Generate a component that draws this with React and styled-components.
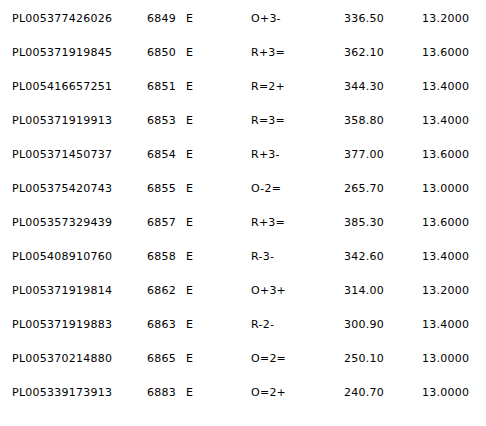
import React from "react";
import styled, { createGlobalStyle } from "styled-components";

const Global = createGlobalStyle`
  html, body { margin: 0; padding: 0; background: #fff; }
  body { font-family: "DejaVu Sans", Verdana, sans-serif; }
`;

const Table = styled.div`
  display: flex;
  flex-direction: column;
  padding-top: 1px;
  width: 486px;
  color: #000;
  font-size: 11px;
  line-height: 13px;
  letter-spacing: 0.25px;
`;

const Row = styled.div`
  display: grid;
  grid-template-columns: 135px 39px 65px 93px 78px 64px;
  height: 34px;
  align-items: center;
  padding-left: 12px;
`;

const Cell = styled.span`
  white-space: nowrap;
`;

const rows = [
  ["PL005377426026", "6849", "E", "O+3-", "336.50", "13.2000"],
  ["PL005371919845", "6850", "E", "R+3=", "362.10", "13.6000"],
  ["PL005416657251", "6851", "E", "R=2+", "344.30", "13.4000"],
  ["PL005371919913", "6853", "E", "R=3=", "358.80", "13.4000"],
  ["PL005371450737", "6854", "E", "R+3-", "377.00", "13.6000"],
  ["PL005375420743", "6855", "E", "O-2=", "265.70", "13.0000"],
  ["PL005357329439", "6857", "E", "R+3=", "385.30", "13.6000"],
  ["PL005408910760", "6858", "E", "R-3-", "342.60", "13.4000"],
  ["PL005371919814", "6862", "E", "O+3+", "314.00", "13.2000"],
  ["PL005371919883", "6863", "E", "R-2-", "300.90", "13.4000"],
  ["PL005370214880", "6865", "E", "O=2=", "250.10", "13.0000"],
  ["PL005339173913", "6883", "E", "O=2+", "240.70", "13.0000"],
];

export default function App() {
  return (
    <>
      <Global />
      <Table>
        {rows.map((r) => (
          <Row key={r[0]}>
            {r.map((c, i) => (
              <Cell key={i}>{c}</Cell>
            ))}
          </Row>
        ))}
      </Table>
    </>
  );
}
